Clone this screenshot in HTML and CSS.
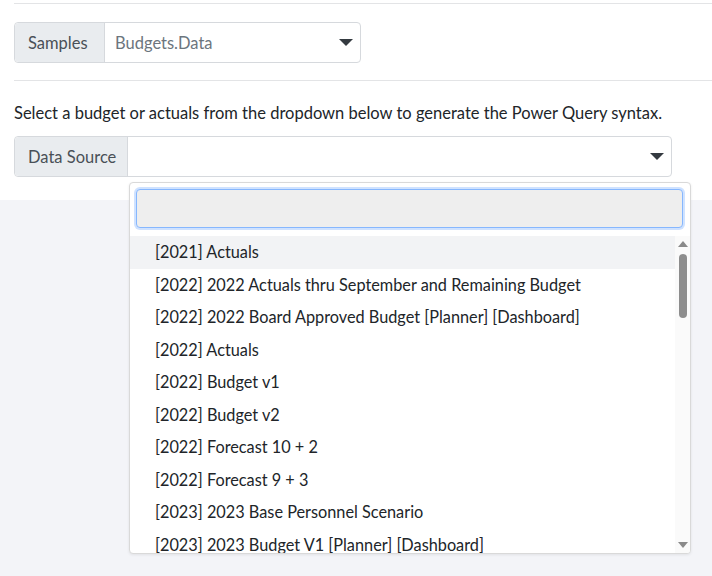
FILE: index.html
```html
<!DOCTYPE html>
<html lang="en">
<head>
    <meta charset="UTF-8">
    <title>Power Query Samples</title>
    <link rel="stylesheet" href="styles.css">
</head>
<body>
    <div class="page">
        <div class="panel">
            <hr class="rule">
            <div class="input-group samples">
                <span class="group-label">Samples</span>
                <div class="fake-select">
                    <span class="value">Budgets.Data</span>
                    <span class="caret"></span>
                </div>
            </div>
            <hr class="rule second">
            <p class="hint">Select a budget or actuals from the dropdown below to generate the Power Query syntax.</p>
            <div class="input-group source">
                <span class="group-label">Data Source</span>
                <div class="fake-select">
                    <span class="value"></span>
                    <span class="caret"></span>
                </div>

                <div class="dropdown">
                    <div class="search-wrap">
                        <input type="text" class="search">
                    </div>
                    <div class="dropdown-body">
                        <ul class="options">
                            <li class="active">[2021] Actuals</li>
                            <li>[2022] 2022 Actuals thru September and Remaining Budget</li>
                            <li>[2022] 2022 Board Approved Budget [Planner] [Dashboard]</li>
                            <li>[2022] Actuals</li>
                            <li>[2022] Budget v1</li>
                            <li>[2022] Budget v2</li>
                            <li>[2022] Forecast 10 + 2</li>
                            <li>[2022] Forecast 9 + 3</li>
                            <li>[2023] 2023 Base Personnel Scenario</li>
                            <li>[2023] 2023 Budget V1 [Planner] [Dashboard]</li>
                        </ul>
                        <div class="scrollbar">
                            <span class="arrow up"></span>
                            <span class="thumb"></span>
                            <span class="arrow down"></span>
                        </div>
                    </div>
                </div>
            </div>
        </div>
    </div>
</body>
</html>
```

FILE: styles.css
```css
html, body {
    margin: 0;
    height: 100%;
}
body {
    background-color: #f3f4f8;
    font-family: Lato, "Liberation Sans", sans-serif;
    font-size: 16.5px;
    color: #212529;
}
.page {
    min-height: 576px;
    position: relative;
}
.panel {
    background-color: #fff;
    height: 200px;
    padding: 3px 0 0 14px;
    box-sizing: border-box;
}
.rule {
    margin: 0;
    border: none;
    border-top: 1px solid #e3e4e6;
}
.rule.second {
    margin-top: 17px;
}
.input-group {
    display: flex;
    height: 41px;
    box-sizing: border-box;
    border: 1px solid #d6d9dd;
    border-radius: 4px;
    position: relative;
}
.samples {
    width: 347px;
    margin-top: 18px;
}
.source {
    width: 658px;
    z-index: 5;
}
.group-label {
    display: flex;
    align-items: center;
    flex-shrink: 0;
    padding: 0 0 0 13px;
    background-color: #e9ecef;
    color: #495057;
    white-space: nowrap;
    border-right: 1px solid #d6d9dd;
    border-radius: 4px 0 0 4px;
    box-sizing: border-box;
}
.source .group-label {
    width: 113px;
}
.samples .group-label {
    width: 90px;
}
.fake-select {
    flex: 1;
    display: flex;
    align-items: center;
    justify-content: space-between;
    padding: 0 7px 0 10px;
}
.fake-select .value {
    color: #6c757d;
}
.caret {
    width: 0;
    height: 0;
    border-left: 7px solid transparent;
    border-right: 7px solid transparent;
    border-top: 7px solid #343a40;
}
.hint {
    margin: 20px 0 11px;
    line-height: 24px;
}
.dropdown {
    position: absolute;
    top: 45px;
    left: 114px;
    z-index: 10;
    width: 562px;
    height: 372px;
    box-sizing: border-box;
    background-color: #fff;
    border: 1px solid #d9d9d9;
    border-radius: 4px;
    box-shadow: 0 1px 3px rgba(0, 0, 0, 0.08);
    display: flex;
    flex-direction: column;
    overflow: hidden;
}
.search-wrap {
    padding: 6px 7px 8px 6px;
}
.search {
    display: block;
    width: 100%;
    height: 39px;
    box-sizing: border-box;
    background-color: #eee;
    border: 1px solid #86b7fe;
    border-radius: 4px;
    box-shadow: 0 0 0 2px #cfe2ff;
    outline: none;
}
.dropdown-body {
    flex: 1;
    display: flex;
    min-height: 0;
}
.options {
    flex: 1;
    list-style: none;
    margin: 0;
    padding: 0;
    overflow: hidden;
    font-size: 16.3px;
}
.options li {
    line-height: 32.5px;
    padding-left: 25px;
    white-space: nowrap;
}
.options li.active {
    background-color: #f2f3f5;
}
.scrollbar {
    width: 15px;
    background-color: #fafafa;
    display: flex;
    flex-direction: column;
    align-items: center;
    padding-top: 5px;
}
.arrow {
    width: 0;
    height: 0;
    border-left: 5px solid transparent;
    border-right: 5px solid transparent;
}
.arrow.up {
    border-bottom: 6px solid #8a8a8a;
}
.arrow.down {
    margin-top: auto;
    margin-bottom: 5px;
    border-top: 6px solid #8a8a8a;
}
.thumb {
    width: 8px;
    height: 64px;
    margin-top: 7px;
    border-radius: 4px;
    background-color: #8d8d8d;
}
```
